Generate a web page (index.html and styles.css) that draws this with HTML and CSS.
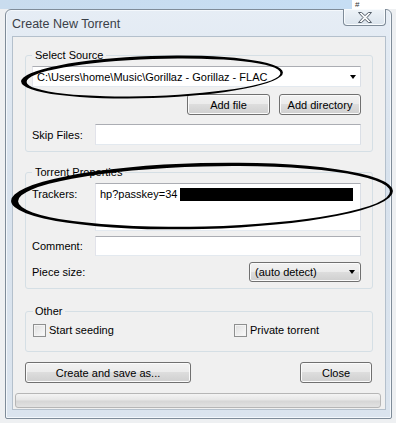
FILE: index.html
```html
<!DOCTYPE html>
<html>
<head>
<meta charset="utf-8">
<title>Create New Torrent</title>
<link rel="stylesheet" href="styles.css">
</head>
<body>
<div class="topstrip"><span class="hash">#</span></div>
<div class="window">
  <div class="titlebar">
    <span class="title">Create New Torrent</span>
    <div class="closebtn">
      <svg width="14" height="11" viewBox="0 0 14 11"><polygon points="0.5,0.5 3.6,0.5 7,3.6 10.4,0.5 13.5,0.5 9,5.5 13.5,10.5 10.4,10.5 7,7.4 3.6,10.5 0.5,10.5 5,5.5" fill="#f6f7f8" stroke="#56606b" stroke-width="1"/></svg>
    </div>
  </div>
  <div class="client">
    <div class="content">
      <fieldset class="group g1">
        <legend>Select Source</legend>
        <div class="combo"><span class="ctext">C:\Users\home\Music\Gorillaz - Gorillaz - FLAC</span><span class="arrow"></span></div>
        <div class="btnrow">
          <div class="btn addfile">Add file</div>
          <div class="btn adddir">Add directory</div>
        </div>
        <div class="row skip">
          <span class="lbl">Skip Files:</span>
          <div class="input h21"></div>
        </div>
      </fieldset>

      <fieldset class="group g2">
        <legend>Torrent Properties</legend>
        <div class="row trackers">
          <span class="lbl">Trackers:</span>
          <div class="input area"><span class="tracktext">hp?passkey=34</span><span class="redact"></span></div>
        </div>
        <div class="row comment">
          <span class="lbl">Comment:</span>
          <div class="input h20"></div>
        </div>
        <div class="row piece">
          <span class="lbl">Piece size:</span>
          <div class="btn select"><span>(auto detect)</span><span class="arrow"></span></div>
        </div>
      </fieldset>

      <fieldset class="group g3">
        <legend>Other</legend>
        <div class="checks">
          <label class="check"><span class="box"></span>Start seeding</label>
          <label class="check"><span class="box"></span>Private torrent</label>
        </div>
      </fieldset>

      <div class="actions">
        <div class="btn create">Create and save as...</div>
        <div class="btn close">Close</div>
      </div>
    </div>
    <div class="progress"></div>
  </div>
</div>
<svg class="marks" width="396" height="423" viewBox="0 0 396 423">
  <path fill="#000" fill-rule="evenodd" transform="rotate(-2 152 77)" d="M21,77 a131,21 0 1,0 262,0 a131,21 0 1,0 -262,0Z M26.5,77.5 a127,18.5 0 1,0 254,0 a127,18.5 0 1,0 -254,0Z"/>
  <path fill="#000" fill-rule="evenodd" transform="rotate(-1.5 202 196)" d="M11,196 a191,33 0 1,0 382,0 a191,33 0 1,0 -382,0Z M18,196.5 a186,30 0 1,0 372,0 a186,30 0 1,0 -372,0Z"/>
</svg>
</body>
</html>
```
FILE: styles.css
```css
html, body {
  margin: 0;
  padding: 0;
}
body {
  width: 396px;
  height: 423px;
  overflow: hidden;
  position: relative;
  background: #eef0f2;
  font-family: "Liberation Sans", Arial, sans-serif;
  font-size: 11px;
  color: #000;
}
.topstrip {
  height: 9px;
  background: linear-gradient(to right, #c9dcee 0, #c6def4 352px, #ffffff 352px);
  position: relative;
}
.hash {
  position: absolute;
  left: 355px;
  top: 0;
  font-size: 8px;
  line-height: 9px;
  color: #333;
}
.window {
  margin-left: 5px;
  width: 387px;
  height: 410px;
  box-sizing: border-box;
  border: 1px solid #7f8c99;
  border-radius: 6px 6px 2px 2px;
  background: linear-gradient(#e6edf5, #d8e2ed 40%, #dbe4ee);
  padding: 0 5px 8px 6px;
  display: flex;
  flex-direction: column;
  box-shadow: inset 0 0 0 1px #f4f8fc;
}
.titlebar {
  height: 26px;
  flex: none;
  display: flex;
  align-items: center;
}
.title {
  font-size: 12.5px;
  color: #3a4048;
  padding-top: 1px;
}
.closebtn {
  margin-left: auto;
  align-self: flex-start;
  margin-top: -1px;
  width: 43px;
  height: 17px;
  box-sizing: border-box;
  border: 1px solid #7e8b98;
  border-top: none;
  border-radius: 0 0 4px 4px;
  background: linear-gradient(#eef3f8, #dbe4ed);
  box-shadow: inset 0 0 0 1px #f8fbfd;
  display: flex;
  align-items: center;
  justify-content: center;
}
.client {
  flex: 1;
  background: #f0f0f0;
  border: 1px solid #b4c0cc;
  padding: 12px 0 1px 0;
  display: flex;
  flex-direction: column;
}
.content {
  margin: 0 12px;
  display: flex;
  flex-direction: column;
}
.group {
  margin: 0;
  border: 1px solid #d5dfe5;
  border-radius: 3px;
  min-width: 0;
}
.group legend {
  padding: 0 3px;
  line-height: 12px;
  font-size: 11px;
}
.g1 {
  padding: 5px 11px 6px 6px;
}
.g2 {
  margin-top: 14px;
  padding: 5px 11px 6px 6px;
}
.g3 {
  margin-top: 16px;
  padding: 7px 11px 14px 7px;
}
.g3 legend {
  padding: 0 2px;
}
.combo {
  height: 21px;
  box-sizing: border-box;
  background: #fff;
  border: 1px solid;
  border-color: #abadb3 #dbdfe6 #e3e9ef #e2e3ea;
  padding: 0 4px 0 4px;
  display: flex;
  align-items: center;
  justify-content: space-between;
}
.arrow {
  width: 0;
  height: 0;
  border-left: 3.5px solid transparent;
  border-right: 3.5px solid transparent;
  border-top: 4px solid #000;
}
.btnrow {
  margin-top: 7px;
  display: flex;
  justify-content: flex-end;
  gap: 9px;
}
.btn {
  height: 21px;
  box-sizing: border-box;
  border: 1px solid #707070;
  border-radius: 3px;
  background: linear-gradient(#f2f2f2 0%, #ebebeb 50%, #dddddd 50%, #cfcfcf 100%);
  box-shadow: inset 0 0 0 1px #fbfbfb;
  display: flex;
  align-items: center;
  justify-content: center;
  color: #000;
}
.addfile { width: 83px; }
.adddir { width: 82px; }
.row {
  display: flex;
  align-items: center;
}
.lbl {
  width: 63px;
  flex: none;
}
.skip { margin-top: 9px; }
.input {
  flex: 1;
  box-sizing: border-box;
  background: #fff;
  border: 1px solid;
  border-color: #abadb3 #dbdfe6 #e3e9ef #e2e3ea;
}
.h21 { height: 21px; }
.h20 { height: 20px; }
.trackers {
  align-items: flex-start;
}
.trackers .lbl {
  padding-top: 5px;
}
.area {
  height: 48px;
  padding: 4px 0 0 4px;
  display: flex;
  align-items: center;
  align-self: flex-start;
  align-content: flex-start;
  flex-wrap: wrap;
}
.tracktext {
  line-height: 13px;
}
.redact {
  display: inline-block;
  width: 173px;
  height: 13px;
  margin-left: 3px;
  background: #000;
}
.comment { margin-top: 5px; }
.piece {
  margin-top: 6px;
  justify-content: space-between;
}
.select {
  width: 112px;
  height: 20px;
  justify-content: space-between;
  padding: 0 5px 0 5px;
}
.checks {
  display: grid;
  grid-template-columns: 201px 1fr;
  height: 13px;
}
.check {
  display: flex;
  align-items: center;
  gap: 3px;
  line-height: 13px;
}
.box {
  width: 13px;
  height: 13px;
  box-sizing: border-box;
  border: 1px solid #8e8f8f;
  background: linear-gradient(135deg, #dedede, #fbfbfb);
  box-shadow: inset 0 0 0 1px #f4f4f4;
}
.actions {
  margin-top: 10px;
  display: flex;
  justify-content: space-between;
  padding-right: 1px;
}
.create { width: 166px; }
.close { width: 72px; }
.progress {
  margin: 10px 0 0 2px;
  width: 366px;
  height: 15px;
  box-sizing: border-box;
  border: 1px solid #b6b6b6;
  border-radius: 3px;
  background: linear-gradient(#f4f4f4, #e6e6e6 45%, #d6d6d6 55%, #e2e2e2);
}
.marks {
  position: absolute;
  left: 0;
  top: 0;
  pointer-events: none;
}
```
